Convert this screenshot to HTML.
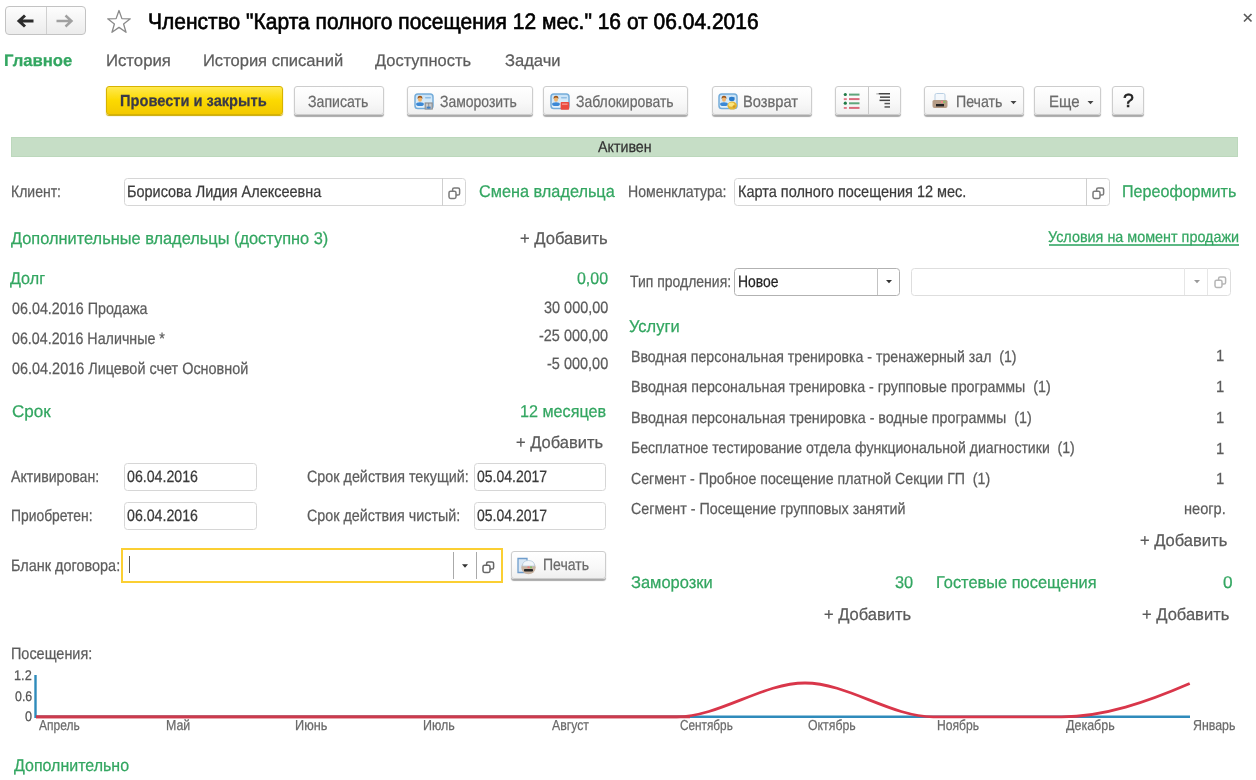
<!DOCTYPE html>
<html><head><meta charset="utf-8"><style>
*{box-sizing:border-box}
html,body{margin:0;padding:0;background:#fff;width:1256px;height:780px;overflow:hidden;position:relative}
body{font-family:"Liberation Sans",sans-serif}
body>*{filter:blur(0.3px)}
.t{position:absolute;line-height:60px;white-space:pre;transform-origin:0 0;text-rendering:geometricPrecision;-webkit-text-stroke:0.25px currentColor}
.a{position:absolute}
.btn{position:absolute;border:1px solid #cdcdcd;border-radius:3px;background:linear-gradient(#ffffff,#f8f8f8 60%,#efefef);box-shadow:0 1.5px 1px #a9a9a9}
.inp{position:absolute;border:1.6px solid #d6d6d6;border-radius:3.5px;background:#fff}
.div{position:absolute;width:1px;background:#cfcfcf}
</style></head>
<body>
<div class="btn" style="left:5px;top:6px;width:81px;height:29px;border-radius:4px;box-shadow:none;border-color:#c3c3c3;background:linear-gradient(#fdfdfd,#ececec)"></div>
<div class="a" style="left:46px;top:7px;width:1px;height:27px;background:#d0d0d0"></div>
<svg class="a" style="left:16px;top:13px" width="20" height="16" viewBox="0 0 20 16"><path d="M3 8H17.5M9 2.5L3 8L9 13.5" fill="none" stroke="#2b2b2b" stroke-width="3"/></svg>
<svg class="a" style="left:54px;top:13px" width="20" height="16" viewBox="0 0 20 16"><path d="M2.5 8H17.5M11.5 2.5L17.5 8L11.5 13.5" fill="none" stroke="#a0a0a0" stroke-width="2.4"/></svg>
<svg class="a" style="left:105px;top:8px" width="28" height="27" viewBox="0 0 28 27"><path d="M14 2.5L16.9 10.6L25.3 10.8L18.6 16L21 24.3L14 19.4L7 24.3L9.4 16L2.7 10.8L11.1 10.6Z" fill="none" stroke="#8a8a8a" stroke-width="1.3" stroke-linejoin="round"/></svg>
<svg class="a" style="left:1242px;top:12px" width="11" height="11" viewBox="0 0 11 11"><path d="M2 2L9.5 9.5M9.5 2L2 9.5" stroke="#5a5a5a" stroke-width="1.7"/></svg>
<div class="btn" style="left:106px;top:86px;width:177px;height:29px;border-color:#d7b300;background:linear-gradient(#ffe94f,#fcd900 50%,#f3c900);box-shadow:0 1px 1px #c8a800"></div>
<div class="btn" style="left:293.5px;top:86px;width:90.5px;height:29px"></div>
<div class="btn" style="left:407.0px;top:86px;width:125.5px;height:29px"></div>
<div class="btn" style="left:543.0px;top:86px;width:145.0px;height:29px"></div>
<div class="btn" style="left:711.5px;top:86px;width:100.5px;height:29px"></div>
<div class="btn" style="left:923.5px;top:86px;width:100.0px;height:29px"></div>
<div class="btn" style="left:1034.0px;top:86px;width:67.0px;height:29px"></div>
<div class="btn" style="left:1112.0px;top:86px;width:31.5px;height:29px"></div>
<div class="btn" style="left:835px;top:86px;width:66px;height:29px"></div>
<div class="a" style="left:867.5px;top:87px;width:1px;height:27px;background:#c9c9c9"></div>
<svg class="a" style="left:842px;top:92px" width="20" height="18" viewBox="0 0 20 18"><circle cx="3.3" cy="2.5" r="1.6" fill="#1f7a45"/><rect x="7" y="1.6" width="10.5" height="2" fill="#5fa57b"/><rect x="1.8" y="6.2" width="3" height="1.9" fill="#e07a88"/><rect x="7" y="6.1" width="10.5" height="2" fill="#d96a7a"/><circle cx="3.3" cy="11.2" r="1.6" fill="#1f7a45"/><rect x="7" y="10.3" width="10.5" height="2" fill="#5fa57b"/><rect x="1.8" y="15" width="3" height="1.9" fill="#e07a88"/><rect x="7" y="14.9" width="10.5" height="2" fill="#d96a7a"/></svg>
<svg class="a" style="left:875px;top:92px" width="16" height="17" viewBox="0 0 16 17"><rect x="1.5" y="1.2" width="1.2" height="1.3" fill="#999"/><rect x="3.5" y="1" width="11.5" height="1.5" fill="#444"/><rect x="5" y="4.4" width="10" height="1.5" fill="#444"/><rect x="4.5" y="7.6" width="10.5" height="1.5" fill="#444"/><rect x="9.5" y="10.8" width="5.5" height="1.5" fill="#555"/><rect x="9.5" y="14.2" width="5.5" height="1.5" fill="#555"/></svg>
<svg class="a" style="left:413.5px;top:92.5px" width="20" height="17" viewBox="0 0 20 17"><defs><linearGradient id="cg" x1="0" y1="0" x2="0" y2="1"><stop offset="0" stop-color="#c4e0f6"/><stop offset="1" stop-color="#eaf5fc"/></linearGradient></defs><rect x="1" y="1" width="18" height="14.5" rx="2.8" fill="url(#cg)" stroke="#74acd9" stroke-width="1.5"/><ellipse cx="6" cy="11.2" rx="3.9" ry="1.9" fill="#3b88d5"/><ellipse cx="6" cy="6.4" rx="2" ry="2.4" fill="#f0b46c"/><path d="M3.6 6Q3.4 2.8 6 2.8Q8.6 2.8 8.4 6Q7.6 4.4 6 4.4Q4.4 4.4 3.6 6Z" fill="#9c5417"/><rect x="11" y="4" width="6" height="1.5" rx="0.7" fill="#8fbde4"/><rect x="10.6" y="9.4" width="8.2" height="7.2" fill="#8e9194"/><rect x="11.8" y="10.6" width="2.4" height="5" fill="#c8cacc"/><rect x="15.2" y="10.6" width="2.4" height="5" fill="#c8cacc"/><rect x="12.6" y="13.6" width="4" height="2" fill="#3e7fc4"/></svg>
<svg class="a" style="left:549.5px;top:92.5px" width="20" height="17" viewBox="0 0 20 17"><defs><linearGradient id="cg" x1="0" y1="0" x2="0" y2="1"><stop offset="0" stop-color="#c4e0f6"/><stop offset="1" stop-color="#eaf5fc"/></linearGradient></defs><rect x="1" y="1" width="18" height="14.5" rx="2.8" fill="url(#cg)" stroke="#74acd9" stroke-width="1.5"/><ellipse cx="6" cy="11.2" rx="3.9" ry="1.9" fill="#3b88d5"/><ellipse cx="6" cy="6.4" rx="2" ry="2.4" fill="#f0b46c"/><path d="M3.6 6Q3.4 2.8 6 2.8Q8.6 2.8 8.4 6Q7.6 4.4 6 4.4Q4.4 4.4 3.6 6Z" fill="#9c5417"/><rect x="11" y="4" width="6" height="1.5" rx="0.7" fill="#8fbde4"/><rect x="10.6" y="9" width="8.6" height="7.8" rx="1" fill="#ea4a3f"/><rect x="12" y="10.4" width="5.6" height="1.6" fill="#f68b82"/></svg>
<svg class="a" style="left:717.5px;top:92.5px" width="20" height="17" viewBox="0 0 20 17"><defs><linearGradient id="cg" x1="0" y1="0" x2="0" y2="1"><stop offset="0" stop-color="#c4e0f6"/><stop offset="1" stop-color="#eaf5fc"/></linearGradient></defs><rect x="1" y="1" width="18" height="14.5" rx="2.8" fill="url(#cg)" stroke="#74acd9" stroke-width="1.5"/><ellipse cx="6" cy="11.2" rx="3.9" ry="1.9" fill="#3b88d5"/><ellipse cx="6" cy="6.4" rx="2" ry="2.4" fill="#f0b46c"/><path d="M3.6 6Q3.4 2.8 6 2.8Q8.6 2.8 8.4 6Q7.6 4.4 6 4.4Q4.4 4.4 3.6 6Z" fill="#9c5417"/><rect x="11" y="4" width="6" height="1.5" rx="0.7" fill="#8fbde4"/><ellipse cx="13.8" cy="6" rx="2.8" ry="2.2" fill="#2a7bcb"/><ellipse cx="14.2" cy="12.6" rx="4.8" ry="4" fill="#e2b533"/><ellipse cx="13.4" cy="11.6" rx="3" ry="2.2" fill="#fbe57e"/><circle cx="16" cy="13.5" r="1.3" fill="#d49a1c"/></svg>
<svg class="a" style="left:931px;top:92px" width="18" height="18" viewBox="0 0 18 18"><rect x="4" y="1.5" width="10" height="8" rx="1.5" fill="#f4f8fc" stroke="#b9cfe3" stroke-width="1"/><path d="M1.5 9.5Q1.5 8 3 8H15Q16.5 8 16.5 9.5V14Q16.5 16 14.5 16H3.5Q1.5 16 1.5 14Z" fill="#b59c86"/><rect x="5" y="12" width="8" height="2.4" fill="#222"/><rect x="10" y="9" width="2.2" height="2" fill="#f08a8a"/><rect x="12.3" y="9" width="2" height="2" fill="#8cc06a"/></svg>
<svg class="a" style="left:1010px;top:100px" width="7" height="5" viewBox="0 0 7 5"><path d="M0.5 1H6.5L3.5 4.2Z" fill="#444"/></svg>
<svg class="a" style="left:1087px;top:100px" width="7" height="5" viewBox="0 0 7 5"><path d="M0.5 1H6.5L3.5 4.2Z" fill="#444"/></svg>
<div class="a" style="left:11px;top:137px;width:1227px;height:20px;background:#c6dec6;border:1px solid #bcd8bc"></div>
<div class="inp" style="left:124px;top:177.5px;width:342px;height:28.5px"></div>
<div class="div" style="left:442px;top:178px;height:27.5px"></div>
<div class="inp" style="left:734px;top:177.5px;width:375.5px;height:28.5px"></div>
<div class="div" style="left:1086px;top:178px;height:27.5px"></div>
<svg class="a" style="left:448px;top:186.5px" width="13" height="13" viewBox="0 0 13 13"><rect x="4.6" y="1" width="7" height="7" rx="1.6" fill="none" stroke="#7a7a7a" stroke-width="1.5"/><rect x="1" y="4.2" width="7" height="7.2" rx="1.6" fill="#fff" stroke="#7a7a7a" stroke-width="1.5"/></svg>
<svg class="a" style="left:1092px;top:186.5px" width="13" height="13" viewBox="0 0 13 13"><rect x="4.6" y="1" width="7" height="7" rx="1.6" fill="none" stroke="#7a7a7a" stroke-width="1.5"/><rect x="1" y="4.2" width="7" height="7.2" rx="1.6" fill="#fff" stroke="#7a7a7a" stroke-width="1.5"/></svg>
<div class="inp" style="left:734px;top:267.5px;width:165.5px;height:28px;border-color:#b2b2b2"></div>
<div class="div" style="left:876.5px;top:268px;height:27px;background:#c3c3c3"></div>
<svg class="a" style="left:885px;top:279px" width="8" height="5" viewBox="0 0 8 5"><path d="M1 1H7L4 4.2Z" fill="#333"/></svg>
<div class="inp" style="left:911px;top:267.5px;width:320px;height:28px;border-color:#dedede"></div>
<div class="div" style="left:1184px;top:268px;height:27px;background:#e6e6e6"></div>
<div class="div" style="left:1207px;top:268px;height:27px;background:#e6e6e6"></div>
<svg class="a" style="left:1193px;top:279px" width="8" height="5" viewBox="0 0 8 5"><path d="M1 1H7L4 4.2Z" fill="#999"/></svg>
<svg class="a" style="left:1214px;top:275.5px" width="13" height="13" viewBox="0 0 13 13"><rect x="4.6" y="1" width="7" height="7" rx="1.6" fill="none" stroke="#b5b5b5" stroke-width="1.5"/><rect x="1" y="4.2" width="7" height="7.2" rx="1.6" fill="#fff" stroke="#b5b5b5" stroke-width="1.5"/></svg>
<div class="inp" style="left:124px;top:463px;width:132.5px;height:27.5px"></div>
<div class="inp" style="left:124px;top:502px;width:132.5px;height:27.5px"></div>
<div class="inp" style="left:473.5px;top:463px;width:132.0px;height:27.5px"></div>
<div class="inp" style="left:473.5px;top:502px;width:132.0px;height:27.5px"></div>
<div class="a" style="left:121px;top:548px;width:382px;height:34.5px;border:2px solid #fbcf33;background:#fff"></div>
<div class="div" style="left:452.5px;top:552px;height:27px;width:1.5px;background:#aaaaaa"></div>
<div class="div" style="left:475.5px;top:552px;height:27px;width:1.5px;background:#aaaaaa"></div>
<div class="a" style="left:1049px;top:244px;width:190px;height:2px;background:#5cb884"></div>
<svg class="a" style="left:461px;top:563px" width="8" height="6" viewBox="0 0 8 6"><path d="M1 1.2H7L4 4.8Z" fill="#333"/></svg>
<svg class="a" style="left:482px;top:560.5px" width="13" height="13" viewBox="0 0 13 13"><rect x="4.6" y="1" width="7" height="7" rx="1.6" fill="none" stroke="#666" stroke-width="1.5"/><rect x="1" y="4.2" width="7" height="7.2" rx="1.6" fill="#fff" stroke="#666" stroke-width="1.5"/></svg>
<div class="a" style="left:128.5px;top:556px;width:1.6px;height:17px;background:#555"></div>
<div class="btn" style="left:511px;top:550.5px;width:94.5px;height:28.5px"></div>
<svg class="a" style="left:517px;top:557px" width="20" height="18" viewBox="0 0 20 18"><path d="M1 1.5H10V15.5H1Z" fill="#dbe8f5" stroke="#6f9dcc" stroke-width="1.3"/><ellipse cx="11.5" cy="10.5" rx="7.2" ry="6.8" fill="#c9b4a2"/><path d="M5.5 9Q5.5 3.5 11.5 3.5Q17.5 3.5 17.5 9Z" fill="#f2f6fa" stroke="#b8cde0" stroke-width="0.8"/><rect x="7" y="12" width="9" height="2.6" rx="0.8" fill="#262626"/><rect x="10.5" y="9.4" width="2.2" height="1.8" fill="#ec7f7c"/><rect x="13" y="9.4" width="2" height="1.8" fill="#8cc06a"/></svg>
<svg class="a" style="left:0;top:660px" width="1256" height="70" viewBox="0 660 1256 70"><line x1="35.5" y1="675" x2="35.5" y2="718" stroke="#2f8bbb" stroke-width="2.4"/><line x1="35" y1="716.8" x2="1190" y2="716.8" stroke="#2f8bbb" stroke-width="2.6"/><path d="M36 716.8H676.8C719.5 716.8 762.3 683 805 683C847.7 683 890.5 716.8 933.3 716.8H1061.5C1104.2 716.8 1147 702 1189.7 683.5" fill="none" stroke="#d9364a" stroke-width="2.8"/><line x1="36" y1="716.8" x2="690" y2="716.8" stroke="#cc3a4c" stroke-width="2.8"/></svg>
<div class="t" style="left:148.43px;top:-7.80px;font-size:22.5px;font-weight:400;color:#000000;transform:scaleX(0.9331);-webkit-text-stroke:0.65px #000;">Членство &quot;Карта полного посещения 12 мес.&quot; 16 от 06.04.2016</div>
<div class="t" style="left:4.00px;top:30.60px;font-size:16.7px;font-weight:700;color:#33a661;transform:scaleX(1.0000);">Главное</div>
<div class="t" style="left:105.70px;top:30.50px;font-size:16.7px;font-weight:400;color:#5c5c5c;transform:scaleX(1.0016);">История</div>
<div class="t" style="left:202.71px;top:30.50px;font-size:16.7px;font-weight:400;color:#5c5c5c;transform:scaleX(0.9900);">История списаний</div>
<div class="t" style="left:375.30px;top:30.50px;font-size:16.7px;font-weight:400;color:#5c5c5c;transform:scaleX(0.9845);">Доступность</div>
<div class="t" style="left:505.21px;top:30.50px;font-size:16.7px;font-weight:400;color:#5c5c5c;transform:scaleX(0.9907);">Задачи</div>
<div class="t" style="left:120.09px;top:72.40px;font-size:16.0px;font-weight:700;color:#3a3a48;transform:scaleX(0.9145);">Провести и закрыть</div>
<div class="t" style="left:308.13px;top:71.70px;font-size:16.3px;font-weight:400;color:#6a6a6a;transform:scaleX(0.8676);">Записать</div>
<div class="t" style="left:439.64px;top:71.70px;font-size:16.3px;font-weight:400;color:#6a6a6a;transform:scaleX(0.8580);">Заморозить</div>
<div class="t" style="left:575.74px;top:71.70px;font-size:16.3px;font-weight:400;color:#6a6a6a;transform:scaleX(0.8589);">Заблокировать</div>
<div class="t" style="left:742.90px;top:71.70px;font-size:16.3px;font-weight:400;color:#6a6a6a;transform:scaleX(0.9017);">Возврат</div>
<div class="t" style="left:955.83px;top:71.70px;font-size:16.3px;font-weight:400;color:#6a6a6a;transform:scaleX(0.8712);">Печать</div>
<div class="t" style="left:1048.58px;top:71.70px;font-size:16.3px;font-weight:400;color:#6a6a6a;transform:scaleX(0.9219);">Еще</div>
<div class="t" style="left:1122.98px;top:71.80px;font-size:19.0px;font-weight:400;color:#222;transform:scaleX(1.0222);-webkit-text-stroke:0.6px #222;">?</div>
<div class="t" style="left:597.90px;top:118.30px;font-size:15.6px;font-weight:400;color:#333;transform:scaleX(0.9138);">Активен</div>
<div class="t" style="left:10.95px;top:162.00px;font-size:16.4px;font-weight:400;color:#5c5c5c;transform:scaleX(0.8536);">Клиент:</div>
<div class="t" style="left:126.72px;top:161.80px;font-size:16.4px;font-weight:400;color:#3a3a3a;transform:scaleX(0.8822);">Борисова Лидия Алексеевна</div>
<div class="t" style="left:479.44px;top:162.40px;font-size:17.0px;font-weight:400;color:#33a661;transform:scaleX(0.9574);">Смена владельца</div>
<div class="t" style="left:628.44px;top:162.00px;font-size:16.4px;font-weight:400;color:#5c5c5c;transform:scaleX(0.8598);">Номенклатура:</div>
<div class="t" style="left:738.12px;top:161.80px;font-size:16.4px;font-weight:400;color:#3a3a3a;transform:scaleX(0.8840);">Карта полного посещения 12 мес.</div>
<div class="t" style="left:1122.05px;top:162.40px;font-size:17.0px;font-weight:400;color:#33a661;transform:scaleX(0.9471);">Переоформить</div>
<div class="t" style="left:10.80px;top:208.60px;font-size:17.0px;font-weight:400;color:#33a661;transform:scaleX(0.9629);">Дополнительные владельцы (доступно 3)</div>
<div class="t" style="left:519.62px;top:208.60px;font-size:17.0px;font-weight:400;color:#5a5a5a;transform:scaleX(0.9761);">+ Добавить</div>
<div class="t" style="left:1048.47px;top:208.00px;font-size:15.5px;font-weight:400;color:#33a661;transform:scaleX(0.9279);">Условия на момент продажи</div>
<div class="t" style="left:10.30px;top:248.80px;font-size:17.0px;font-weight:400;color:#33a661;transform:scaleX(0.9486);">Долг</div>
<div class="t" style="left:576.76px;top:249.00px;font-size:17.0px;font-weight:400;color:#33a661;transform:scaleX(0.9375);">0,00</div>
<div class="t" style="left:11.83px;top:278.60px;font-size:16.5px;font-weight:400;color:#5c5c5c;transform:scaleX(0.8684);">06.04.2016 Продажа</div>
<div class="t" style="left:11.84px;top:308.80px;font-size:16.5px;font-weight:400;color:#5c5c5c;transform:scaleX(0.8646);">06.04.2016 Наличные *</div>
<div class="t" style="left:11.83px;top:339.10px;font-size:16.5px;font-weight:400;color:#5c5c5c;transform:scaleX(0.8743);">06.04.2016 Лицевой счет Основной</div>
<div class="t" style="left:543.72px;top:277.60px;font-size:16.5px;font-weight:400;color:#5c5c5c;transform:scaleX(0.8764);">30 000,00</div>
<div class="t" style="left:539.42px;top:306.00px;font-size:16.5px;font-weight:400;color:#5c5c5c;transform:scaleX(0.8753);">-25 000,00</div>
<div class="t" style="left:547.12px;top:333.80px;font-size:16.5px;font-weight:400;color:#5c5c5c;transform:scaleX(0.8779);">-5 000,00</div>
<div class="t" style="left:629.60px;top:251.60px;font-size:16.4px;font-weight:400;color:#5c5c5c;transform:scaleX(0.8530);">Тип продления:</div>
<div class="t" style="left:738.15px;top:251.60px;font-size:16.4px;font-weight:400;color:#222;transform:scaleX(0.8478);">Новое</div>
<div class="t" style="left:629.03px;top:296.80px;font-size:17.0px;font-weight:400;color:#33a661;transform:scaleX(0.9680);">Услуги</div>
<div class="t" style="left:631.42px;top:327.50px;font-size:16.0px;font-weight:400;color:#5c5c5c;transform:scaleX(0.8837);">Вводная персональная тренировка - тренажерный зал  (1)</div>
<div class="t" style="left:631.41px;top:358.00px;font-size:16.0px;font-weight:400;color:#5c5c5c;transform:scaleX(0.8904);">Вводная персональная тренировка - групповые программы  (1)</div>
<div class="t" style="left:631.41px;top:388.50px;font-size:16.0px;font-weight:400;color:#5c5c5c;transform:scaleX(0.8924);">Вводная персональная тренировка - водные программы  (1)</div>
<div class="t" style="left:631.42px;top:419.00px;font-size:16.0px;font-weight:400;color:#5c5c5c;transform:scaleX(0.8801);">Бесплатное тестирование отдела функциональной диагностики  (1)</div>
<div class="t" style="left:631.42px;top:449.50px;font-size:16.0px;font-weight:400;color:#5c5c5c;transform:scaleX(0.8844);">Сегмент - Пробное посещение платной Секции ГП  (1)</div>
<div class="t" style="left:631.41px;top:480.00px;font-size:16.0px;font-weight:400;color:#5c5c5c;transform:scaleX(0.8938);">Сегмент - Посещение групповых занятий</div>
<div class="t" style="left:1216.37px;top:327.40px;font-size:16.0px;font-weight:400;color:#5c5c5c;transform:scaleX(0.9286);">1</div>
<div class="t" style="left:1216.37px;top:358.00px;font-size:16.0px;font-weight:400;color:#5c5c5c;transform:scaleX(0.9286);">1</div>
<div class="t" style="left:1216.37px;top:388.80px;font-size:16.0px;font-weight:400;color:#5c5c5c;transform:scaleX(0.9286);">1</div>
<div class="t" style="left:1216.37px;top:419.50px;font-size:16.0px;font-weight:400;color:#5c5c5c;transform:scaleX(0.9286);">1</div>
<div class="t" style="left:1216.37px;top:450.00px;font-size:16.0px;font-weight:400;color:#5c5c5c;transform:scaleX(0.9286);">1</div>
<div class="t" style="left:1183.69px;top:480.00px;font-size:16.0px;font-weight:400;color:#5c5c5c;transform:scaleX(0.9116);">неогр.</div>
<div class="t" style="left:1140.23px;top:511.30px;font-size:17.0px;font-weight:400;color:#5a5a5a;transform:scaleX(0.9716);">+ Добавить</div>
<div class="t" style="left:12.40px;top:381.50px;font-size:17.0px;font-weight:400;color:#33a661;transform:scaleX(1.0026);">Срок</div>
<div class="t" style="left:519.75px;top:381.50px;font-size:17.0px;font-weight:400;color:#33a661;transform:scaleX(0.9517);">12 месяцев</div>
<div class="t" style="left:516.33px;top:413.40px;font-size:17.0px;font-weight:400;color:#5a5a5a;transform:scaleX(0.9693);">+ Добавить</div>
<div class="t" style="left:10.70px;top:447.40px;font-size:16.4px;font-weight:400;color:#5c5c5c;transform:scaleX(0.8624);">Активирован:</div>
<div class="t" style="left:127.44px;top:447.40px;font-size:16.4px;font-weight:400;color:#3a3a3a;transform:scaleX(0.8642);">06.04.2016</div>
<div class="t" style="left:307.33px;top:447.40px;font-size:16.4px;font-weight:400;color:#5c5c5c;transform:scaleX(0.8743);">Срок действия текущий:</div>
<div class="t" style="left:476.95px;top:447.40px;font-size:16.4px;font-weight:400;color:#3a3a3a;transform:scaleX(0.8543);">05.04.2017</div>
<div class="t" style="left:10.95px;top:485.60px;font-size:16.4px;font-weight:400;color:#5c5c5c;transform:scaleX(0.8468);">Приобретен:</div>
<div class="t" style="left:127.44px;top:485.60px;font-size:16.4px;font-weight:400;color:#3a3a3a;transform:scaleX(0.8642);">06.04.2016</div>
<div class="t" style="left:307.33px;top:485.60px;font-size:16.4px;font-weight:400;color:#5c5c5c;transform:scaleX(0.8728);">Срок действия чистый:</div>
<div class="t" style="left:476.95px;top:485.60px;font-size:16.4px;font-weight:400;color:#3a3a3a;transform:scaleX(0.8543);">05.04.2017</div>
<div class="t" style="left:10.62px;top:536.00px;font-size:16.4px;font-weight:400;color:#5c5c5c;transform:scaleX(0.8811);">Бланк договора:</div>
<div class="t" style="left:543.34px;top:535.30px;font-size:16.3px;font-weight:400;color:#6a6a6a;transform:scaleX(0.8615);">Печать</div>
<div class="t" style="left:631.23px;top:552.50px;font-size:17.0px;font-weight:400;color:#33a661;transform:scaleX(0.9695);">Заморозки</div>
<div class="t" style="left:894.74px;top:552.50px;font-size:17.0px;font-weight:400;color:#33a661;transform:scaleX(0.9611);">30</div>
<div class="t" style="left:936.44px;top:552.60px;font-size:17.0px;font-weight:400;color:#33a661;transform:scaleX(0.9648);">Гостевые посещения</div>
<div class="t" style="left:1222.59px;top:552.60px;font-size:17.0px;font-weight:400;color:#33a661;transform:scaleX(1.0125);">0</div>
<div class="t" style="left:824.03px;top:584.80px;font-size:17.0px;font-weight:400;color:#5a5a5a;transform:scaleX(0.9705);">+ Добавить</div>
<div class="t" style="left:1142.43px;top:584.80px;font-size:17.0px;font-weight:400;color:#5a5a5a;transform:scaleX(0.9727);">+ Добавить</div>
<div class="t" style="left:11.13px;top:623.60px;font-size:16.5px;font-weight:400;color:#5c5c5c;transform:scaleX(0.8747);">Посещения:</div>
<div class="t" style="left:14.29px;top:645.10px;font-size:14px;font-weight:400;color:#555;transform:scaleX(0.9111);">1.2</div>
<div class="t" style="left:14.80px;top:665.60px;font-size:14px;font-weight:400;color:#555;transform:scaleX(0.8842);">0.6</div>
<div class="t" style="left:25.30px;top:685.70px;font-size:14px;font-weight:400;color:#555;transform:scaleX(0.9000);">0</div>
<div class="t" style="left:39.00px;top:696.40px;font-size:14.5px;font-weight:400;color:#6a6a6a;transform:scaleX(0.8286);">Апрель</div>
<div class="t" style="left:166.34px;top:696.40px;font-size:14.5px;font-weight:400;color:#6a6a6a;transform:scaleX(0.8556);">Май</div>
<div class="t" style="left:294.92px;top:696.40px;font-size:14.5px;font-weight:400;color:#6a6a6a;transform:scaleX(0.8771);">Июнь</div>
<div class="t" style="left:423.14px;top:696.40px;font-size:14.5px;font-weight:400;color:#6a6a6a;transform:scaleX(0.8611);">Июль</div>
<div class="t" style="left:551.80px;top:696.40px;font-size:14.5px;font-weight:400;color:#6a6a6a;transform:scaleX(0.8465);">Август</div>
<div class="t" style="left:679.79px;top:696.40px;font-size:14.5px;font-weight:400;color:#6a6a6a;transform:scaleX(0.8125);">Сентябрь</div>
<div class="t" style="left:808.15px;top:696.40px;font-size:14.5px;font-weight:400;color:#6a6a6a;transform:scaleX(0.8491);">Октябрь</div>
<div class="t" style="left:936.57px;top:696.40px;font-size:14.5px;font-weight:400;color:#6a6a6a;transform:scaleX(0.8347);">Ноябрь</div>
<div class="t" style="left:1065.80px;top:696.40px;font-size:14.5px;font-weight:400;color:#6a6a6a;transform:scaleX(0.8607);">Декабрь</div>
<div class="t" style="left:1192.55px;top:696.40px;font-size:14.5px;font-weight:400;color:#6a6a6a;transform:scaleX(0.8521);">Январь</div>
<div class="t" style="left:13.50px;top:736.20px;font-size:17.0px;font-weight:400;color:#33a661;transform:scaleX(0.9402);">Дополнительно</div>
</body></html>
